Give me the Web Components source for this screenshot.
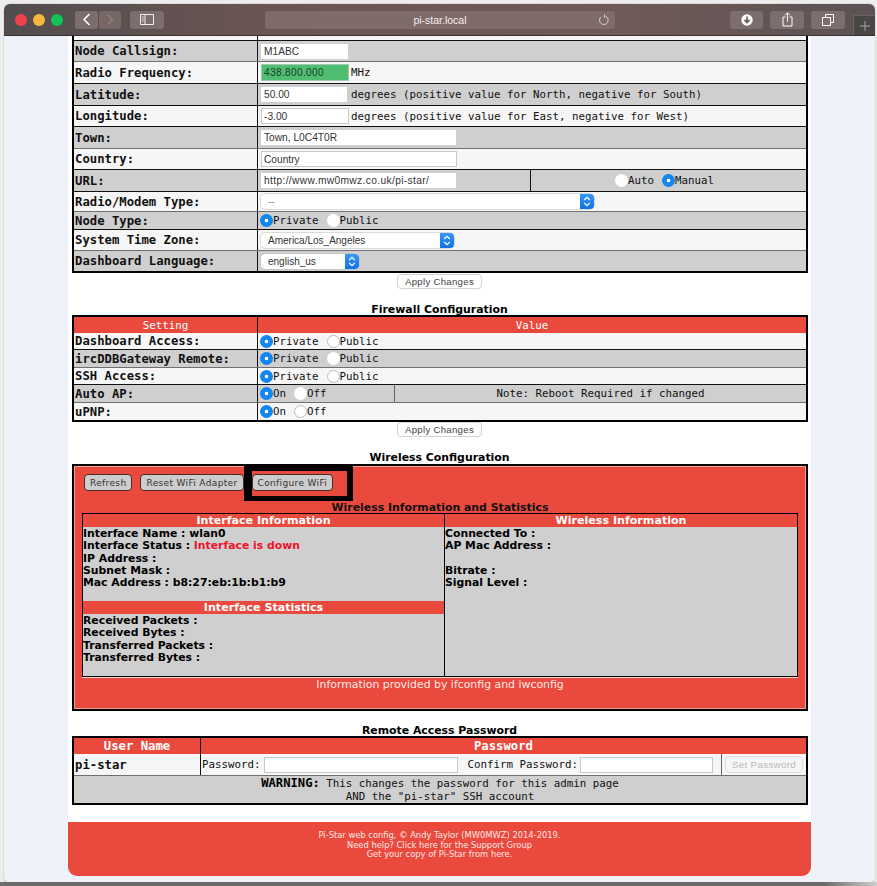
<!DOCTYPE html>
<html>
<head>
<meta charset="utf-8">
<title>pi-star.local</title>
<style>
html, body { margin: 0; height: 886px; overflow: hidden; background: #ededed; }
</style>
</head>
<body>
<mac-window>
  <ps-table cols="183px 1fr" style="border-top:0">
    <ps-row style="height:5px" alt><ps-cell></ps-cell><ps-cell div></ps-cell></ps-row>
    <ps-row style="height:21px" line="soft"><ps-cell label>Node Callsign:</ps-cell><ps-cell div><ps-input style="width:87px">M1ABC</ps-input></ps-cell></ps-row>
    <ps-row style="height:22px" alt><ps-cell label>Radio Frequency:</ps-cell><ps-cell div><ps-input style="width:88px;margin-right:2px;letter-spacing:.3px" green>438.800.000</ps-input>MHz</ps-cell></ps-row>
    <ps-row style="height:22px"><ps-cell label>Latitude:</ps-cell><ps-cell div><ps-input style="width:86px;margin-right:4px">50.00</ps-input>degrees (positive value for North, negative for South)</ps-cell></ps-row>
    <ps-row style="height:21px" alt><ps-cell label>Longitude:</ps-cell><ps-cell div><ps-input style="width:88px;margin-right:2px" edge>-3.00</ps-input>degrees (positive value for East, negative for West)</ps-cell></ps-row>
    <ps-row style="height:22px" line="soft"><ps-cell label>Town:</ps-cell><ps-cell div><ps-input style="width:195px">Town, L0C4T0R</ps-input></ps-cell></ps-row>
    <ps-row style="height:21px" alt><ps-cell label>Country:</ps-cell><ps-cell div><ps-input style="width:196px" edge>Country</ps-input></ps-cell></ps-row>
    <ps-row style="height:22px; --cols:183px 273px 1fr"><ps-cell label>URL:</ps-cell><ps-cell div><ps-input style="width:195px;letter-spacing:.37px">http://www.mw0mwz.co.uk/pi-star/</ps-input></ps-cell><ps-cell div center><ps-radio>Auto</ps-radio><ps-radio on>Manual</ps-radio></ps-cell></ps-row>
    <ps-row style="height:20px" alt line="soft"><ps-cell label>Radio/Modem Type:</ps-cell><ps-cell div><ps-select style="width:333px" dim>--</ps-select></ps-cell></ps-row>
    <ps-row style="height:18px"><ps-cell label>Node Type:</ps-cell><ps-cell div><ps-radio on>Private</ps-radio><ps-radio>Public</ps-radio></ps-cell></ps-row>
    <ps-row style="height:21px" alt line="soft"><ps-cell label>System Time Zone:</ps-cell><ps-cell div><ps-select style="width:193px">America/Los_Angeles</ps-select></ps-cell></ps-row>
    <ps-row style="height:20px" line="none"><ps-cell label>Dashboard Language:</ps-cell><ps-cell div><ps-select style="width:98px">english_us</ps-select></ps-cell></ps-row>
  </ps-table>
  <ps-bar style="margin-top:1px"><ps-button>Apply Changes</ps-button></ps-bar>

  <ps-title style="margin-top:14px;height:12px">Firewall Configuration</ps-title>
  <ps-table cols="183px 1fr">
    <ps-row style="height:16px" head line="none"><ps-cell center>Setting</ps-cell><ps-cell div center>Value</ps-cell></ps-row>
    <ps-row style="height:17px" alt><ps-cell label>Dashboard Access:</ps-cell><ps-cell div><ps-radio on>Private</ps-radio><ps-radio framed>Public</ps-radio></ps-cell></ps-row>
    <ps-row style="height:18px" line="soft"><ps-cell label>ircDDBGateway Remote:</ps-cell><ps-cell div><ps-radio on>Private</ps-radio><ps-radio>Public</ps-radio></ps-cell></ps-row>
    <ps-row style="height:17px" alt><ps-cell label>SSH Access:</ps-cell><ps-cell div><ps-radio on>Private</ps-radio><ps-radio framed>Public</ps-radio></ps-cell></ps-row>
    <ps-row style="height:18px; --cols:183px 137px 1fr" line="soft"><ps-cell label>Auto AP:</ps-cell><ps-cell div><ps-radio on>On</ps-radio><ps-radio>Off</ps-radio></ps-cell><ps-cell div soft center>Note: Reboot Required if changed</ps-cell></ps-row>
    <ps-row style="height:17px" alt line="none"><ps-cell label>uPNP:</ps-cell><ps-cell div><ps-radio on>On</ps-radio><ps-radio framed>Off</ps-radio></ps-cell></ps-row>
  </ps-table>
  <ps-bar><ps-button>Apply Changes</ps-button></ps-bar>

  <ps-title style="margin-top:14px;height:13px">Wireless Configuration</ps-title>
  <wifi-panel>
    <ps-button slot="actions" dark>Refresh</ps-button>
    <ps-button slot="actions" dark>Reset WiFi Adapter</ps-button>
    <ps-button slot="actions" dark marked>Configure WiFi</ps-button>
    <wifi-lines slot="left" heading="Interface Information" style="height:87px">
      <b>Interface Name : wlan0</b>
      <b>Interface Status : <i>Interface is down</i></b>
      <b>IP Address :</b>
      <b>Subnet Mask :</b>
      <b>Mac Address : b8:27:eb:1b:b1:b9</b>
    </wifi-lines>
    <wifi-lines slot="left" heading="Interface Statistics">
      <b>Received Packets :</b>
      <b>Received Bytes :</b>
      <b>Transferred Packets :</b>
      <b>Transferred Bytes :</b>
    </wifi-lines>
    <wifi-lines slot="right" heading="Wireless Information">
      <b>Connected To :</b>
      <b>AP Mac Address :</b>
      <b>&nbsp;</b>
      <b>Bitrate :</b>
      <b>Signal Level :</b>
    </wifi-lines>
  </wifi-panel>

  <ps-title style="margin-top:13px;height:12px">Remote Access Password</ps-title>
  <ps-table cols="126px 1fr">
    <ps-row style="height:16px" head line="none"><ps-cell center label>User Name</ps-cell><ps-cell div center label>Password</ps-cell></ps-row>
    <ps-row style="height:22px; --cols:126px 521px 1fr" alt line="soft"><ps-cell label>pi-star</ps-cell><ps-cell div style="padding-left:1px">Password:<ps-input style="width:194px;margin-left:3px" edge></ps-input><span style="width:10px"></span>Confirm Password:<ps-input style="width:133px;margin-left:2px" edge></ps-input></ps-cell><ps-cell div soft center><ps-button off>Set Password</ps-button></ps-cell></ps-row>
    <ps-row style="height:27px" line="none"><ps-cell center stack><span><ps-strong>WARNING:</ps-strong> This changes the password for this admin page</span><span>AND the "pi-star" SSH account</span></ps-cell></ps-row>
  </ps-table>

  <ps-footer>
    Pi-Star web config, © Andy Taylor (MW0MWZ) 2014-2019.<br>
    Need help? Click here for the Support Group<br>
    Get your copy of Pi-Star from here.
  </ps-footer>
</mac-window>
<desk-edge></desk-edge>

<script>
const MONO = '"DejaVu Sans Mono", monospace';
const SANS = '"Liberation Sans", Arial, sans-serif';
const VERD = '"DejaVu Sans", Verdana, sans-serif';
const RED = '#ea4a3e';

function el(name, css, html, setup) {
  customElements.define(name, class extends HTMLElement {
    constructor() {
      super();
      const shadow = this.attachShadow({ mode: 'open' });
      shadow.innerHTML = `<style>${css}</style>${html}`;
      if (setup) setup(this, shadow);
    }
  });
}

el('mac-window', `
  :host { display: flex; flex-direction: column; height: 878px; margin: 4px 2px 0 4px; border-radius: 6px 6px 4px 4px; overflow: hidden; background: #eef2f8; box-shadow: 0 0 1px #555; }
  .page { width: 743px; height: 840px; margin-left: 64px; background: #fff; padding: 0 4px; box-sizing: border-box; border-radius: 0 0 9px 9px; overflow: hidden; }
`, `<mac-toolbar></mac-toolbar><div class="page"><slot></slot></div>`);

el('mac-toolbar', `
  :host { display: flex; align-items: center; flex: none; height: 32px; box-sizing: border-box; padding-left: 11px; border-bottom: 1px solid #3a3030; background: linear-gradient(90deg, #514d4e, #6a5553 30%, #6f5a58 70%, #5c5253); font: 10.5px ${SANS}; color: #f4eeee; }
  .light { width: 12px; height: 12px; border-radius: 50%; margin-right: 6px; }
  .btn { display: flex; align-items: center; justify-content: center; height: 18px; border-radius: 3px; background: #7d6e6e; }
  .addr { position: relative; width: 350px; justify-content: center; margin-left: 101px; background: #7f6c6a; }
  .addr svg { position: absolute; right: 5px; top: 3px; }
  .plus { align-self: flex-end; width: 22px; height: 20px; margin-left: 8px; background: #4b4646; border: 1px solid #6a6262; border-width: 1px 0 0 1px; box-sizing: border-box; display: flex; align-items: center; justify-content: center; }
  svg { display: block; }
`, `
  <span class="light" style="background:#f0424b"></span>
  <span class="light" style="background:#f5b83a"></span>
  <span class="light" style="background:#13c455;margin-right:12px"></span>
  <span class="btn" style="width:23px;margin-right:1px"><svg width="9" height="13" viewBox="0 0 9 13"><path d="M7.5 1 2 6.5 7.5 12" fill="none" stroke="#fff" stroke-width="1.6"/></svg></span>
  <span class="btn" style="width:22px;background:#776866"><svg width="9" height="13" viewBox="0 0 9 13"><path d="M2 2 6.5 6.5 2 11" fill="none" stroke="#8f8281" stroke-width="1.3"/></svg></span>
  <span class="btn" style="width:34px;margin-left:9px"><svg width="14" height="11" viewBox="0 0 14 11"><path d="M.5.5h13v10H.5zM5 .5v10" fill="none" stroke="#f2eeee"/><path d="M2 3h1.6M2 5h1.6M2 7h1.6" stroke="#f2eeee"/></svg></span>
  <span class="btn addr">pi-star.local<svg width="12" height="12" viewBox="0 0 12 12"><path d="M7.6 2.3A4.3 4.3 0 1 1 3 3M6.5.6v3" fill="none" stroke="#d8d0ce"/></svg></span>
  <span class="btn" style="width:33px;margin-left:115px"><svg width="12" height="12" viewBox="0 0 12 12"><circle cx="6" cy="6" r="5.7" fill="#fff"/><path d="M6 2.6v6M3.4 5.8 6 8.6l2.6-2.8" fill="none" stroke="#6e5c5b" stroke-width="1.7"/></svg></span>
  <span class="btn" style="width:34px;margin-left:7px"><svg width="11" height="15" viewBox="0 0 11 15"><path d="M3.5 5H1v9h9V5H7.5M5.5 9.5V1M3 3.3 5.5.8 8 3.3" fill="none" stroke="#fff"/></svg></span>
  <span class="btn" style="width:34px;margin-left:7px"><svg width="12" height="12" viewBox="0 0 12 12"><path d="M.5 3.5h8v8h-8zM3.5 3.5v-3h8v8h-3" fill="none" stroke="#fff"/></svg></span>
  <span class="plus"><svg width="10" height="10" viewBox="0 0 10 10"><path d="M5 0v10M0 5h10" stroke="#a9a2a2"/></svg></span>
`);

el('ps-table', `
  :host { display: block; width: 736px; box-sizing: border-box; border: 2px solid #000; --cols: 183px 1fr; }
`, `<slot></slot>`, (host) => {
  if (host.getAttribute('cols')) host.style.setProperty('--cols', host.getAttribute('cols'));
});

el('ps-row', `
  :host { display: grid; grid-template-columns: var(--cols); box-sizing: border-box; background: #cfcfcf; color: #111; border-bottom: 1px solid #111; font: 10.8px ${MONO}; }
  :host([alt]) { background: #f6f6f6; }
  :host([line="soft"]) { border-bottom-color: #707070; }
  :host([line="none"]) { border-bottom: 0; }
  :host([head]) { background: ${RED}; color: #fff; }
`, `<slot></slot>`);

el('ps-cell', `
  :host { display: flex; align-items: center; box-sizing: border-box; min-width: 0; padding-left: 2px; white-space: pre; overflow: hidden; }
  :host([label]) { font: bold 12.25px ${MONO}; padding-left: 1px; }
  :host([div]) { border-left: 1px solid #111; }
  :host([div][soft]) { border-left-color: #666; }
  :host([center]) { justify-content: center; padding-left: 0; }
  :host([stack]) { flex-direction: column; grid-column: 1 / -1; justify-content: center; line-height: 13px; }
`, `<slot></slot>`);

el('ps-strong', `:host { font: bold 12.2px ${MONO}; color: #000; }`, `<slot></slot>`);

el('ps-input', `
  :host { display: flex; align-items: center; flex: none; height: 15px; margin-left: 1px; padding-left: 3px; box-sizing: border-box; background: #fff; color: #333; font: 10.2px ${SANS}; overflow: hidden; }
  :host([edge]) { border: 1px solid #c9c9c9; height: 16px; padding-left: 2px; }
  :host([green]) { background: #4fbe72; color: #1d3d28; height: 17px; border: 1px solid #a4c9ae; padding-left: 2px; }
`, `<slot></slot>`);

el('ps-select', `
  :host { display: flex; align-items: center; flex: none; height: 15px; margin-left: 1px; padding-left: 7px; box-sizing: border-box; position: relative; background: #fff; color: #333; font: 10px ${SANS}; border-radius: 4px; box-shadow: 0 0 0 .5px #bbb; }
  :host([dim]) { color: #888; }
  .arrow { position: absolute; right: 0; top: 0; width: 14px; height: 15px; background: linear-gradient(#3a97f5, #0f72e2); border-radius: 0 4px 4px 0; display: flex; align-items: center; justify-content: center; }
  svg { display: block; }
`, `<slot></slot><span class="arrow"><svg width="8" height="11" viewBox="0 0 8 11"><path d="M1.2 4 4 1.4 6.8 4M1.2 7 4 9.6 6.8 7" fill="none" stroke="#fff" stroke-width="1.2"/></svg></span>`);

el('ps-radio', `
  :host { display: inline-flex; align-items: center; margin-right: 8px; }
  .dot { width: 13px; height: 13px; border-radius: 50%; background: #fff; box-sizing: border-box; flex: none; }
  :host([framed]) .dot { border: 1px solid #bdbdbd; }
  :host([on]) .dot { background: radial-gradient(circle, #fff 0 1.6px, #1285ee 2.1px); }
`, `<span class="dot"></span><slot></slot>`);

el('ps-button', `
  :host { display: inline-flex; align-items: center; justify-content: center; position: relative; box-sizing: border-box; height: 15px; padding: 0 7px; background: #fff; color: #444; font: 9.6px ${SANS}; border: 1px solid #d2d2d2; border-radius: 4px; letter-spacing: .3px; white-space: nowrap; }
  :host([dark]) { height: 17px; background: #cdcdcd; color: #333; border: 1px solid #4a2a28; font: 9px ${VERD}; padding: 0 5px; letter-spacing: .35px; }
  :host([off]) { background: #f6f6f6; color: #b9b9b9; border-color: #ddd; height: 17px; padding: 0 6px; font-size: 9.8px; }
  .mark { display: none; position: absolute; left: -9px; right: -21px; top: -10px; bottom: -11px; border: solid #000; border-width: 6px 6px 5px 8px; pointer-events: none; }
  :host([marked]) .mark { display: block; }
`, `<slot></slot><span class="mark"></span>`);

el('ps-bar', `:host { display: flex; justify-content: center; }`, `<slot></slot>`);

el('ps-title', `
  :host { display: block; height: 14px; text-align: center; color: #000; font: bold 10.9px/14px ${VERD}; }
`, `<slot></slot>`);

el('wifi-panel', `
  :host { display: block; width: 736px; height: 247px; box-sizing: border-box; border: 2px solid #000; background: ${RED}; box-shadow: inset 0 0 0 1px #f1a29b; }
  .actions { display: flex; gap: 8px; padding: 8px 0 0 10px; height: 17px; }
  h3 { margin: 9px 0 0; height: 13px; font: bold 10.9px/15px ${VERD}; text-align: center; color: #111; }
  .grid { display: grid; grid-template-columns: 361px 1fr; width: 716px; height: 164px; margin-left: 8px; box-sizing: border-box; border: 1px solid #000; background: #cfcfcf; box-shadow: 0 1px 0 #f7d7d3; }
  .grid > div + div { border-left: 1px solid #000; }
  p { margin: 0; height: 14px; font: 10.9px/16px ${VERD}; text-align: center; color: #fde9e6; }
`, `
  <div class="actions"><slot name="actions"></slot></div>
  <h3>Wireless Information and Statistics</h3>
  <div class="grid"><div><slot name="left"></slot></div><div><slot name="right"></slot></div></div>
  <p>Information provided by ifconfig and iwconfig</p>
`);

el('wifi-lines', `
  :host { display: block; box-sizing: border-box; font: bold 10.85px/12.35px ${VERD}; color: #000; }
  h4 { margin: 0; height: 13px; background: ${RED}; color: #fff; font: bold 11.1px/13px ${VERD}; text-align: center; }
  .body { padding-top: 1px; display: flex; flex-direction: column; }
  ::slotted(b) { display: block; }
`, `<h4></h4><div class="body"><slot></slot></div>`, (host, shadow) => {
  shadow.querySelector('h4').textContent = host.getAttribute('heading');
});

el('ps-footer', `
  :host { display: block; height: 54px; margin: 17px -4px 0; padding-top: 9px; box-sizing: border-box; background: ${RED}; color: #fde6e3; text-align: center; font: 8.35px/9.5px ${VERD}; }
`, `<slot></slot>`);

el('desk-edge', `
  :host { display: block; height: 4px; background: linear-gradient(90deg, #6b6b6b 0, #6b6b6b 94%, #cfcfcf); }
`, ``);
</script>
<style>
wifi-lines i { font-style: normal; color: #f0132b; }
</style>
</body>
</html>
